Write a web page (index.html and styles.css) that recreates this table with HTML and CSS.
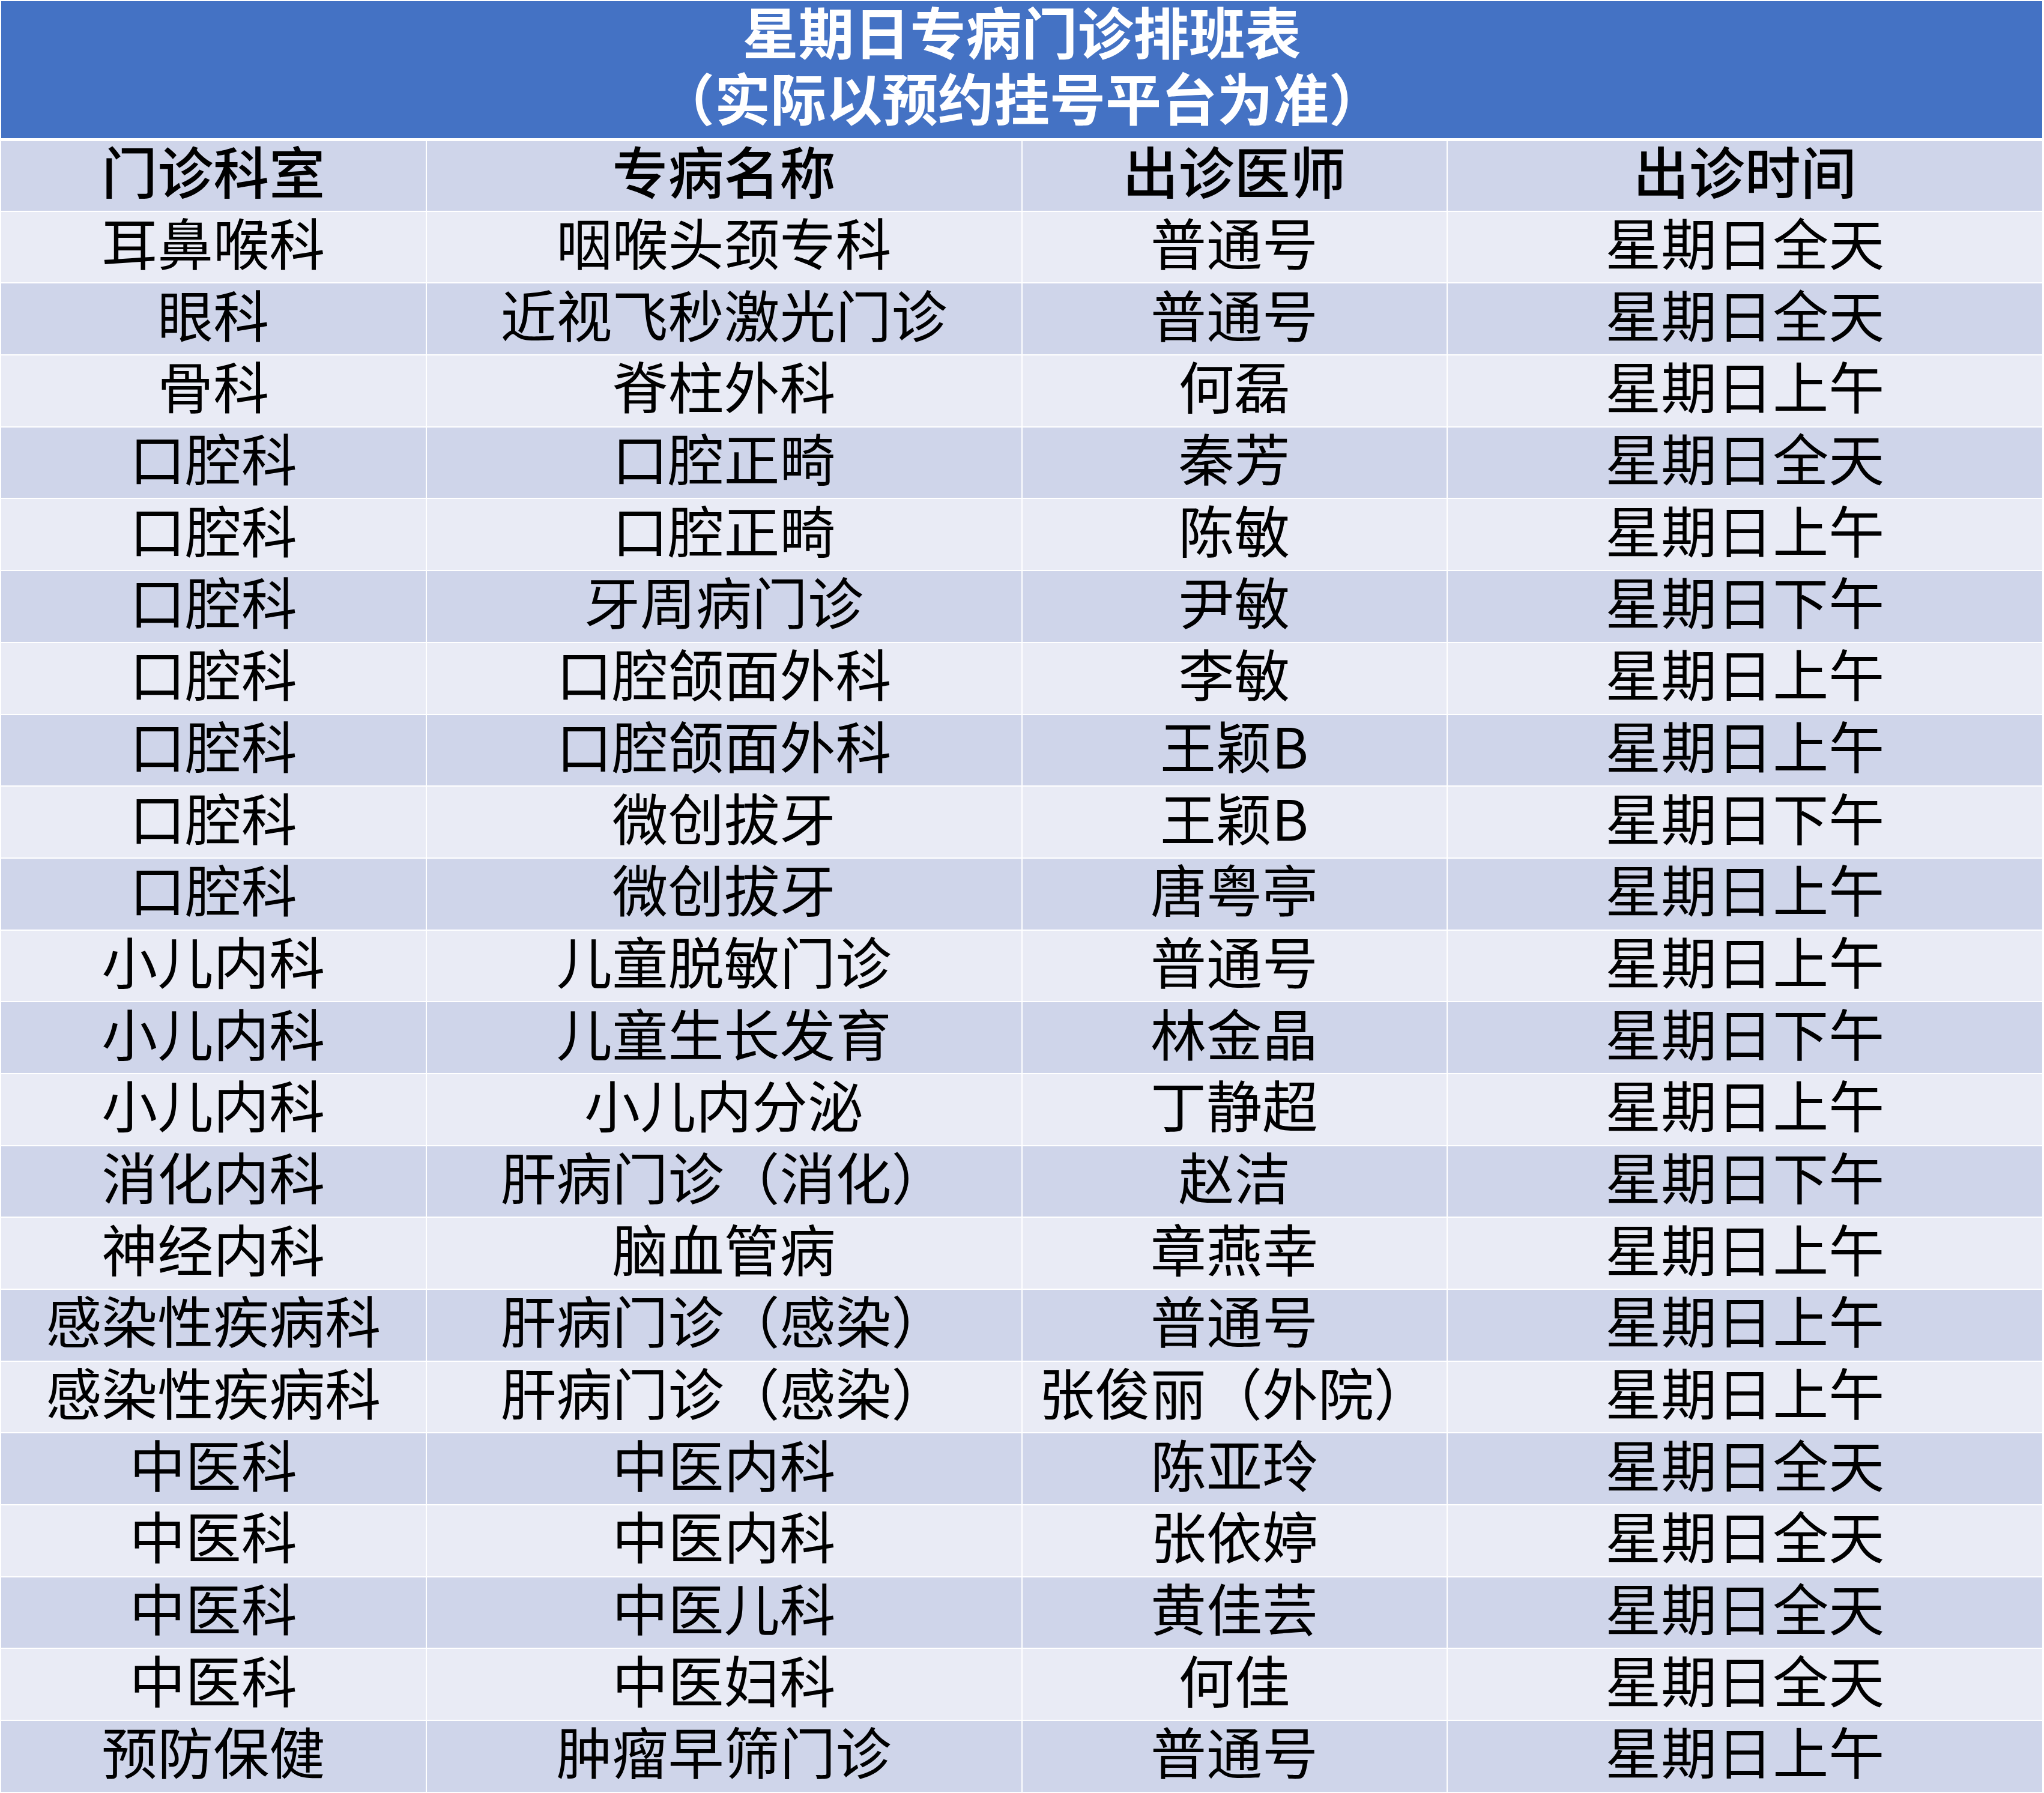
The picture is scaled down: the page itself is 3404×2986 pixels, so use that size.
FILE: index.html
```html
<!DOCTYPE html>
<html lang="zh-CN">
<head>
<meta charset="utf-8">
<title>星期日专病门诊排班表</title>
<link rel="stylesheet" href="styles.css">
</head>
<body>
<div class="sheet">
  <div class="title">
    <div class="title-line">星期日专病门诊排班表</div>
    <div class="title-line">（实际以预约挂号平台为准）</div>
  </div>
  <div class="rows">
    <div class="row head band-a"><div class="cell">门诊科室</div><div class="cell">专病名称</div><div class="cell">出诊医师</div><div class="cell">出诊时间</div></div>
    <div class="row band-b"><div class="cell">耳鼻喉科</div><div class="cell">咽喉头颈专科</div><div class="cell">普通号</div><div class="cell">星期日全天</div></div>
    <div class="row band-a"><div class="cell">眼科</div><div class="cell">近视飞秒激光门诊</div><div class="cell">普通号</div><div class="cell">星期日全天</div></div>
    <div class="row band-b"><div class="cell">骨科</div><div class="cell">脊柱外科</div><div class="cell">何磊</div><div class="cell">星期日上午</div></div>
    <div class="row band-a"><div class="cell">口腔科</div><div class="cell">口腔正畸</div><div class="cell">秦芳</div><div class="cell">星期日全天</div></div>
    <div class="row band-b"><div class="cell">口腔科</div><div class="cell">口腔正畸</div><div class="cell">陈敏</div><div class="cell">星期日上午</div></div>
    <div class="row band-a"><div class="cell">口腔科</div><div class="cell">牙周病门诊</div><div class="cell">尹敏</div><div class="cell">星期日下午</div></div>
    <div class="row band-b"><div class="cell">口腔科</div><div class="cell">口腔颌面外科</div><div class="cell">李敏</div><div class="cell">星期日上午</div></div>
    <div class="row band-a"><div class="cell">口腔科</div><div class="cell">口腔颌面外科</div><div class="cell">王颖B</div><div class="cell">星期日上午</div></div>
    <div class="row band-b"><div class="cell">口腔科</div><div class="cell">微创拔牙</div><div class="cell">王颖B</div><div class="cell">星期日下午</div></div>
    <div class="row band-a"><div class="cell">口腔科</div><div class="cell">微创拔牙</div><div class="cell">唐粤亭</div><div class="cell">星期日上午</div></div>
    <div class="row band-b"><div class="cell">小儿内科</div><div class="cell">儿童脱敏门诊</div><div class="cell">普通号</div><div class="cell">星期日上午</div></div>
    <div class="row band-a"><div class="cell">小儿内科</div><div class="cell">儿童生长发育</div><div class="cell">林金晶</div><div class="cell">星期日下午</div></div>
    <div class="row band-b"><div class="cell">小儿内科</div><div class="cell">小儿内分泌</div><div class="cell">丁静超</div><div class="cell">星期日上午</div></div>
    <div class="row band-a"><div class="cell">消化内科</div><div class="cell">肝病门诊（消化）</div><div class="cell">赵洁</div><div class="cell">星期日下午</div></div>
    <div class="row band-b"><div class="cell">神经内科</div><div class="cell">脑血管病</div><div class="cell">章燕幸</div><div class="cell">星期日上午</div></div>
    <div class="row band-a"><div class="cell">感染性疾病科</div><div class="cell">肝病门诊（感染）</div><div class="cell">普通号</div><div class="cell">星期日上午</div></div>
    <div class="row band-b"><div class="cell">感染性疾病科</div><div class="cell">肝病门诊（感染）</div><div class="cell">张俊丽（外院）</div><div class="cell">星期日上午</div></div>
    <div class="row band-a"><div class="cell">中医科</div><div class="cell">中医内科</div><div class="cell">陈亚玲</div><div class="cell">星期日全天</div></div>
    <div class="row band-b"><div class="cell">中医科</div><div class="cell">中医内科</div><div class="cell">张依婷</div><div class="cell">星期日全天</div></div>
    <div class="row band-a"><div class="cell">中医科</div><div class="cell">中医儿科</div><div class="cell">黄佳芸</div><div class="cell">星期日全天</div></div>
    <div class="row band-b"><div class="cell">中医科</div><div class="cell">中医妇科</div><div class="cell">何佳</div><div class="cell">星期日全天</div></div>
    <div class="row band-a"><div class="cell">预防保健</div><div class="cell">肿瘤早筛门诊</div><div class="cell">普通号</div><div class="cell">星期日上午</div></div>
  </div>
</div>
</body>
</html>
```

FILE: styles.css
```css
html, body {
  margin: 0;
  padding: 0;
  background: #ffffff;
}

body {
  font-family: "Noto Sans CJK SC", "Microsoft YaHei", sans-serif;
  color: #000000;
}

.sheet {
  width: 3399px;
  padding: 2px 0 0 2px;
}

.title {
  height: 228px;
  box-sizing: border-box;
  padding-bottom: 20px;
  background: #4472c4;
  color: #ffffff;
  font-weight: 700;
  font-size: 93px;
  display: flex;
  flex-direction: column;
  align-items: center;
  justify-content: center;
}

.title-line {
  line-height: 110px;
  height: 110px;
  flex: none;
}

.rows {
  margin-top: 5px;
  display: flex;
  flex-direction: column;
  gap: 2px;
}

.row {
  display: grid;
  grid-template-columns: 706.5px 990px 706px 990.5px;
  column-gap: 2px;
  height: 117.7px;
}

.row.head {
  height: 115.7px;
  font-weight: 500;
}

.cell {
  display: flex;
  align-items: center;
  justify-content: center;
  font-size: 93px;
  line-height: 1;
  padding-bottom: 20px;
  box-sizing: border-box;
  white-space: nowrap;
}

.band-a .cell {
  background: #cfd5ea;
}

.band-b .cell {
  background: #e9ebf5;
}
```
